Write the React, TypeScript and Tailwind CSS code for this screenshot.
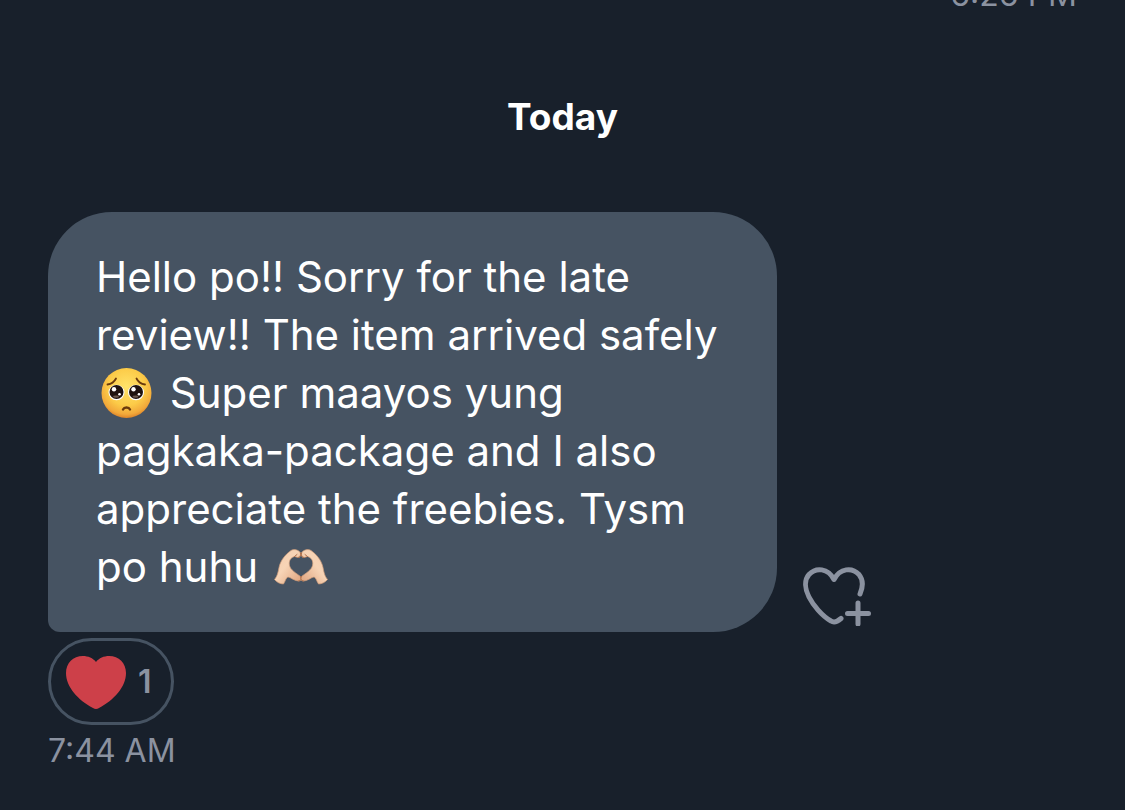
function PleadingFace() {
    return (
        <svg
            role="img"
            aria-label="pleading face"
            viewBox="0 0 52 52"
            className="inline-block size-[52px] ml-1 mr-1.5 align-[-11px]"
        >
            <defs>
                <radialGradient id="face" cx="50%" cy="38%" r="62%">
                    <stop offset="0" stopColor="#ffe36a" />
                    <stop offset="0.6" stopColor="#fccb48" />
                    <stop offset="0.88" stopColor="#f2a83a" />
                    <stop offset="1" stopColor="#dd8429" />
                </radialGradient>
            </defs>
            <circle cx="26.500" cy="26" r="25" fill="url(#face)" />
            <g fill="none" stroke="#6b3a0c" strokeWidth="1.8" strokeLinecap="round">
                <path d="M7.500 17.500C11 17 14.500 14.500 16 11.500" />
                <path d="M45 17.500C41.500 17 38 14.500 36.500 11.500" />
                <path d="M23 42.500c1.200-2.600 5.800-2.600 7 0" strokeWidth="2.400" />
            </g>
            {/* eyes */}
            <ellipse cx="16.500" cy="25.500" rx="8" ry="7.800" fill="#fff" />
            <ellipse cx="36" cy="25.500" rx="8" ry="7.800" fill="#fff" />
            <circle cx="16.500" cy="25" r="7" fill="#1f1310" />
            <circle cx="36" cy="25" r="7" fill="#1f1310" />
            <g fill="#fff">
                <circle cx="14" cy="22.300" r="2.200" />
                <circle cx="33.500" cy="22.300" r="2.200" />
                <circle cx="19.500" cy="27.300" r="1.300" />
                <circle cx="39" cy="27.300" r="1.300" />
            </g>
            <g fill="#6d5a50">
                <ellipse cx="16" cy="29.600" rx="3" ry="1.200" />
                <ellipse cx="35.500" cy="29.600" rx="3" ry="1.200" />
            </g>
        </svg>
    )
}

function Hand() {
    return (
        <>
            <path
                d="M0.500 30.500C3.500 27 4 23.500 5 18.500C6.500 11 12 5 17 1.500C20 -0.500 25 1 26.500 4C27.500 6.500 26 8.500 24 8.500L20.500 7.500C16.500 8.500 14.500 12 15.500 16.500C16.500 21 22 24 26.500 27.500C28 30 27 32 24.500 32C20.500 32 17 28.500 14 28C12 28.500 11.500 32 9.500 35C6 35 2.500 33 0.500 30.500Z"
                fill="url(#skin)"
                stroke="#cf9c7a"
                strokeWidth="0.700"
            />
            <path
                d="M20.500 7.500L23 5.500M24 8.500C26 8.500 27 7 26.500 4M24.500 32C27 31.500 28 29.500 26.500 27.500"
                fill="none"
                stroke="#b0714c"
                strokeWidth="1"
                strokeLinecap="round"
            />
        </>
    )
}

function HeartHands() {
    return (
        <svg
            role="img"
            aria-label="heart hands"
            viewBox="0 0 54 36"
            className="inline-block w-[54px] h-[36px] ml-1 align-[-3px]"
        >
            <defs>
                <linearGradient id="skin" x1="0" y1="0" x2="1" y2="1">
                    <stop offset="0" stopColor="#f3cbac" />
                    <stop offset="0.45" stopColor="#f7d4b6" />
                    <stop offset="1" stopColor="#dda17b" />
                </linearGradient>
            </defs>
            <Hand />
            <g transform="matrix(-1 0 0 1 54 0)">
                <Hand />
            </g>
        </svg>
    )
}

function AddReactionIcon() {
    return (
        <svg
            viewBox="0 0 68 60"
            className="w-[68px] h-[60px]"
            fill="none"
            stroke="currentColor"
            strokeWidth="5"
            strokeLinecap="round"
            aria-hidden="true"
        >
            <path
                d="M57 28C60 21 60.500 14 56 8.500C49 1 37 2 31 13.500C25 2 13 1 6 8.500C1 14 2 23 6 31C10 39 19 50 28 55C31 57 34 56 38 52.500"
                strokeLinejoin="round"
            />
            <path d="M55 37v21M44.500 47.500h21" />
        </svg>
    )
}

function ReactionHeart() {
    return (
        <svg viewBox="0 0 60 54" className="w-[60px] h-[54px]" aria-hidden="true">
            <path
                d="M30 7C27 3 22 1 17 1C7 1 0 8 0 18C0 32 12 45 27 53Q30 55 33 53C48 45 60 32 60 18C60 8 53 1 43 1C38 1 33 3 30 7Z"
                fill="#cd4049"
            />
        </svg>
    )
}

export default function App() {
    return (
        <main className="min-h-screen bg-[#18202b] px-12 pb-8 font-['Inter',sans-serif]">
            {/* previous message, scrolled almost out of view */}
            <div className="flex h-2 items-end justify-end overflow-hidden">
                <time className="text-[32px] leading-[26px] text-[#8b92a0]">6:26 PM</time>
            </div>

            <h2 className="mt-[85px] text-center text-[37px] leading-12 font-bold text-white">
                Today
            </h2>

            <div className="mt-[71px] flex items-end gap-[26px]">
                <p className="w-full max-w-[729px] rounded-[64px] rounded-bl-xl bg-[#465362] px-12 py-9 text-[42px] leading-[58px] text-white">
                    Hello po!! Sorry for the late<br />
                    review!! The item arrived safely<br />
                    <PleadingFace /> Super maayos yung<br />
                    pagkaka-package and I also<br />
                    appreciate the freebies. Tysm<br />
                    po huhu <HeartHands />
                </p>
                <button type="button" aria-label="Add reaction" className="mb-1.5 shrink-0 text-[#8b92a0]">
                    <AddReactionIcon />
                </button>
            </div>

            <button
                type="button"
                aria-label="Heart, 1 reaction"
                className="mt-1.5 flex h-[87px] w-[126px] items-center gap-3 rounded-full border-3 border-[#465362] pl-[15px] text-[32px] font-semibold text-[#8b92a0]"
            >
                <ReactionHeart />
                1
            </button>
            <time className="mt-1 block text-[32px] leading-11 text-[#8b92a0]">7:44 AM</time>
        </main>
    )
}
